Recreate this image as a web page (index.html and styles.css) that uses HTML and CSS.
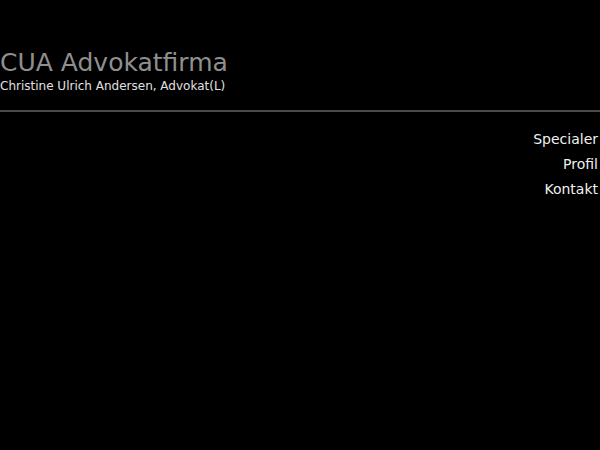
FILE: index.html
```html
<!DOCTYPE html>
<html lang="da">
<head>
<meta charset="utf-8">
<title>CUA Advokatfirma</title>
<link rel="stylesheet" href="styles.css">
</head>
<body>
<header class="header">
  <h1 class="title">CUA Advokatfirma</h1>
  <p class="subtitle">Christine Ulrich Andersen, Advokat(L)</p>
</header>
<div class="rule"></div>
<nav class="nav">
  <a class="nav-link" href="#">Specialer</a>
  <a class="nav-link" href="#">Profil</a>
  <a class="nav-link" href="#">Kontakt</a>
</nav>
</body>
</html>
```
FILE: styles.css
```css
html, body {
  margin: 0;
  padding: 0;
  background: #000;
  font-family: "DejaVu Sans", sans-serif;
}
.header {
  padding-top: 48px;
}
.title {
  margin: 0;
  font-size: 25px;
  line-height: 29px;
  font-weight: normal;
  color: #8f8f8f;
}
.subtitle {
  margin: 2px 0 0 0;
  font-size: 12px;
  line-height: 14px;
  color: #e0e0e0;
}
.rule {
  margin-top: 17px;
  height: 2px;
  background: #4a4a4a;
}
.nav {
  display: flex;
  flex-direction: column;
  align-items: flex-end;
  padding-top: 15px;
  padding-right: 2px;
}
.nav-link {
  font-size: 14px;
  line-height: 25px;
  color: #f0f0f0;
  text-decoration: none;
}
```
